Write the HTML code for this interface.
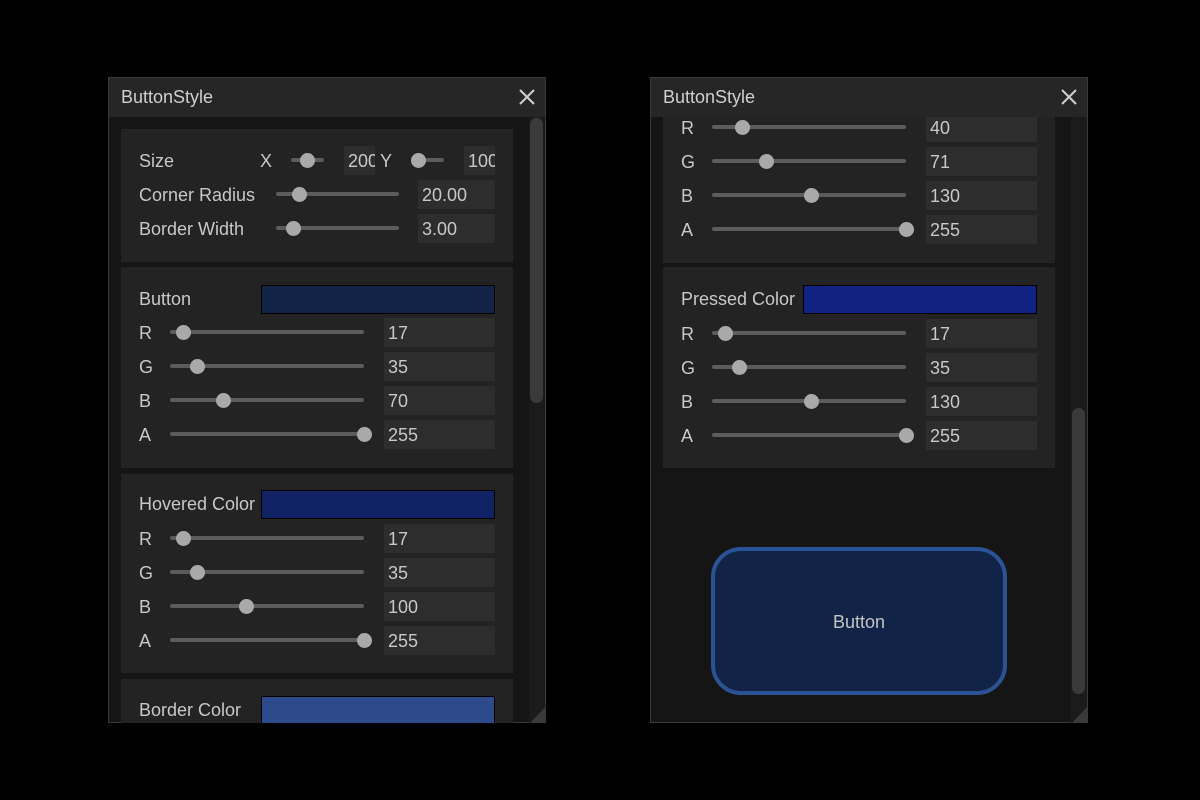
<!DOCTYPE html><html><head><style>
*{margin:0;padding:0;box-sizing:border-box}
body{width:1200px;height:800px;background:#000;position:relative;overflow:hidden;font-family:"Liberation Sans","DejaVu Sans",sans-serif;color:#c8c8c8;font-size:18px}
.a{position:absolute}
.win{position:absolute;top:77px;width:438px;height:646px;background:#151515;border:1px solid #3a3a3a}
.title{position:absolute;left:0;top:0;width:100%;height:39px;background:#262626;z-index:2}
.title span{position:absolute;left:12px;top:9px;font-size:18px;color:#cfcfcf}
.clip{position:absolute;left:0;top:39px;width:100%;height:606px;overflow:hidden}
.inner{position:absolute}
.p{position:absolute;background:#232323}
.l{position:absolute;line-height:22px;white-space:nowrap}
.t{position:absolute;height:4px;background:#5c5c5c;border-radius:2px}
.k{position:absolute;width:15px;height:15px;border-radius:50%;background:#a9a9a9}
.i{position:absolute;height:29px;background:#2d2d2d;padding-left:4px;line-height:30px;overflow:hidden;white-space:nowrap}
.c{position:absolute;border:1px solid #000}
.sb{position:absolute;background:#3a3a3a;border-radius:7px;width:13px}
</style></head><body>

<!-- LEFT WINDOW -->
<div class="win" style="left:108px">
<div class="title"><span>ButtonStyle</span>
<svg class="a" style="left:410px;top:11px" width="16" height="16"><path d="M1 1L15 15M15 1L1 15" stroke="#d0d0d0" stroke-width="2"/></svg></div>
<div class="clip"><div class="inner" style="left:-109px;top:-117px">
<div class="a" style="left:529px;top:116px;width:16px;height:607px;background:#1b1b1b"></div>
<div class="sb" style="left:530px;top:118px;height:285px"></div>

<div class="p" style="left:121px;top:129px;width:392px;height:133px"></div>
<div class="l" style="left:139px;top:150px">Size</div>
<div class="l" style="left:260px;top:150px">X</div>
<div class="t" style="left:291px;top:158px;width:33px"></div><div class="k" style="left:300px;top:153px"></div>
<div class="i" style="left:344px;top:146px;width:31px">200</div>
<div class="l" style="left:380px;top:150px">Y</div>
<div class="t" style="left:411px;top:158px;width:33px"></div><div class="k" style="left:411px;top:153px"></div>
<div class="i" style="left:464px;top:146px;width:31px">100</div>
<div class="l" style="left:139px;top:184px">Corner Radius</div>
<div class="t" style="left:276px;top:192px;width:123px"></div><div class="k" style="left:292px;top:187px"></div>
<div class="i" style="left:418px;top:180px;width:77px">20.00</div>
<div class="l" style="left:139px;top:218px">Border Width</div>
<div class="t" style="left:276px;top:226px;width:123px"></div><div class="k" style="left:286px;top:221px"></div>
<div class="i" style="left:418px;top:214px;width:77px">3.00</div>

<div class="p" style="left:121px;top:267px;width:392px;height:201px"></div>
<div class="l" style="left:139px;top:288px">Button</div>
<div class="c" style="left:261px;top:285px;width:234px;height:29px;background:#112346"></div>
<div class="l" style="left:139px;top:322px">R</div><div class="t" style="left:170px;top:330px;width:194px"></div><div class="k" style="left:176px;top:325px"></div><div class="i" style="left:384px;top:318px;width:111px">17</div>
<div class="l" style="left:139px;top:356px">G</div><div class="t" style="left:170px;top:364px;width:194px"></div><div class="k" style="left:190px;top:359px"></div><div class="i" style="left:384px;top:352px;width:111px">35</div>
<div class="l" style="left:139px;top:390px">B</div><div class="t" style="left:170px;top:398px;width:194px"></div><div class="k" style="left:216px;top:393px"></div><div class="i" style="left:384px;top:386px;width:111px">70</div>
<div class="l" style="left:139px;top:424px">A</div><div class="t" style="left:170px;top:432px;width:194px"></div><div class="k" style="left:357px;top:427px"></div><div class="i" style="left:384px;top:420px;width:111px">255</div>

<div class="p" style="left:121px;top:474px;width:392px;height:199px"></div>
<div class="l" style="left:139px;top:493px;width:118px;overflow:hidden">Hovered Color</div>
<div class="c" style="left:261px;top:490px;width:234px;height:29px;background:#112364"></div>
<div class="l" style="left:139px;top:528px">R</div><div class="t" style="left:170px;top:536px;width:194px"></div><div class="k" style="left:176px;top:531px"></div><div class="i" style="left:384px;top:524px;width:111px">17</div>
<div class="l" style="left:139px;top:562px">G</div><div class="t" style="left:170px;top:570px;width:194px"></div><div class="k" style="left:190px;top:565px"></div><div class="i" style="left:384px;top:558px;width:111px">35</div>
<div class="l" style="left:139px;top:596px">B</div><div class="t" style="left:170px;top:604px;width:194px"></div><div class="k" style="left:239px;top:599px"></div><div class="i" style="left:384px;top:592px;width:111px">100</div>
<div class="l" style="left:139px;top:630px">A</div><div class="t" style="left:170px;top:638px;width:194px"></div><div class="k" style="left:357px;top:633px"></div><div class="i" style="left:384px;top:626px;width:111px">255</div>

<div class="p" style="left:121px;top:679px;width:392px;height:60px"></div>
<div class="l" style="left:139px;top:699px">Border Color</div>
<div class="c" style="left:261px;top:696px;width:234px;height:29px;background:#2c4a8c"></div>
<svg class="a" style="left:530px;top:706px" width="16" height="17"><path d="M16 0L16 17L0 17Z" fill="#3a3a3a"/></svg>
</div></div></div>

<!-- RIGHT WINDOW -->
<div class="win" style="left:650px">
<div class="title"><span>ButtonStyle</span>
<svg class="a" style="left:410px;top:11px" width="16" height="16"><path d="M1 1L15 15M15 1L1 15" stroke="#d0d0d0" stroke-width="2"/></svg></div>
<div class="clip"><div class="inner" style="left:-651px;top:-117px">
<div class="a" style="left:1071px;top:116px;width:16px;height:607px;background:#1b1b1b"></div>
<div class="sb" style="left:1072px;top:408px;height:286px"></div>

<div class="p" style="left:663px;top:100px;width:392px;height:163px"></div>
<div class="l" style="left:681px;top:117px">R</div><div class="t" style="left:712px;top:125px;width:194px"></div><div class="k" style="left:735px;top:120px"></div><div class="i" style="left:926px;top:113px;width:111px">40</div>
<div class="l" style="left:681px;top:151px">G</div><div class="t" style="left:712px;top:159px;width:194px"></div><div class="k" style="left:759px;top:154px"></div><div class="i" style="left:926px;top:147px;width:111px">71</div>
<div class="l" style="left:681px;top:185px">B</div><div class="t" style="left:712px;top:193px;width:194px"></div><div class="k" style="left:804px;top:188px"></div><div class="i" style="left:926px;top:181px;width:111px">130</div>
<div class="l" style="left:681px;top:219px">A</div><div class="t" style="left:712px;top:227px;width:194px"></div><div class="k" style="left:899px;top:222px"></div><div class="i" style="left:926px;top:215px;width:111px">255</div>

<div class="p" style="left:663px;top:267px;width:392px;height:201px"></div>
<div class="l" style="left:681px;top:288px">Pressed Color</div>
<div class="c" style="left:803px;top:285px;width:234px;height:29px;background:#112382"></div>
<div class="l" style="left:681px;top:323px">R</div><div class="t" style="left:712px;top:331px;width:194px"></div><div class="k" style="left:718px;top:326px"></div><div class="i" style="left:926px;top:319px;width:111px">17</div>
<div class="l" style="left:681px;top:357px">G</div><div class="t" style="left:712px;top:365px;width:194px"></div><div class="k" style="left:732px;top:360px"></div><div class="i" style="left:926px;top:353px;width:111px">35</div>
<div class="l" style="left:681px;top:391px">B</div><div class="t" style="left:712px;top:399px;width:194px"></div><div class="k" style="left:804px;top:394px"></div><div class="i" style="left:926px;top:387px;width:111px">130</div>
<div class="l" style="left:681px;top:425px">A</div><div class="t" style="left:712px;top:433px;width:194px"></div><div class="k" style="left:899px;top:428px"></div><div class="i" style="left:926px;top:421px;width:111px">255</div>

<div class="a" style="left:711px;top:547px;width:296px;height:148px;border:4px solid #2c5296;border-radius:30px;background:#112347;text-align:center;line-height:142px;font-size:18px;color:#c4c4c4">Button</div>
<svg class="a" style="left:1072px;top:706px" width="16" height="17"><path d="M16 0L16 17L0 17Z" fill="#3a3a3a"/></svg>
</div></div></div>
</body></html>
